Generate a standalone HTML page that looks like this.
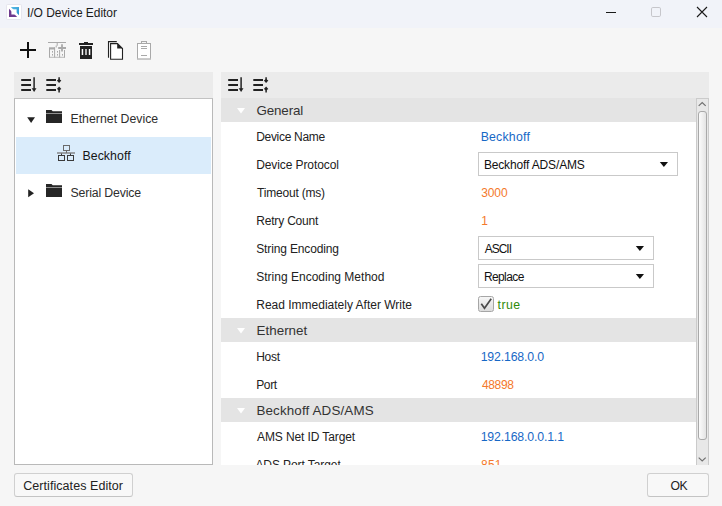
<!DOCTYPE html>
<html>
<head>
<meta charset="utf-8">
<title>I/O Device Editor</title>
<style>
*{box-sizing:border-box;margin:0;padding:0}
html,body{width:722px;height:506px;overflow:hidden}
body{background:#f6f6f6;font-family:"Liberation Sans",sans-serif;font-size:12px;color:#222;position:relative}
.abs{position:absolute}
.t{position:absolute;white-space:nowrap}
.titlebar{left:0;top:0;width:722px;height:28px;background:#f1f3f9}
.strip{background:#ebebeb;height:26px;top:72px}
.tree{left:14px;top:98px;width:199px;height:367px;background:#fff;border:1px solid #b9b9b9;border-top-color:#c2c2c2}
.grid{left:221px;top:98px;width:475px;height:367px;background:#fff;overflow:hidden}
.hdr{left:0;width:475px;height:24px;background:#e4e4e4}
.combo{left:257px;height:24px;border:1px solid #c9c9c9;background:#fff}
.btn{height:24px;border:1px solid #d0d0d0;border-bottom-color:#c4c4c4;background:#f8f8f8;border-radius:3px}
.sb{left:696px;top:98px;width:13px;height:367px;background:#e8e8e8;border:1px solid #cbcbcb;border-bottom:none}
</style>
</head>
<body>
<div class="abs titlebar"></div>
<svg class="abs" style="left:0;top:0" width="28" height="28" viewBox="0 0 28 28">
  <defs><linearGradient id="gb" x1="0" y1="0" x2="1" y2="1"><stop offset="0" stop-color="#58bce6"/><stop offset="1" stop-color="#2a93d0"/></linearGradient></defs>
  <rect x="6.500" y="4.500" width="15" height="15" rx="1.200" fill="#fff" stroke="#e6e6ee"/>
  <polygon points="10.800,7 19,7 19,15.200" fill="url(#gb)"/>
  <polygon points="9,8.800 9,17 17.200,17" fill="#6e3a8e"/>
  <rect x="11.400" y="9.300" width="5.200" height="5.200" fill="#fff"/>
</svg>
<svg class="abs" style="left:600px;top:0" width="122" height="28" viewBox="0 0 122 28">
  <path d="M6 12.500H16" stroke="#1a1a1a" stroke-width="1" fill="none"/>
  <rect x="51.500" y="7.500" width="9" height="9" rx="1.300" fill="none" stroke="#c6c6cb" stroke-width="1"/>
  <path d="M97 7L107 17M107 7L97 17" stroke="#1a1a1a" stroke-width="1.100" fill="none"/>
</svg>

<!-- toolbar -->
<svg class="abs" style="left:0;top:36px" width="170" height="30" viewBox="0 36 170 30">
  <path d="M28 42V58M20 50H36" stroke="#111" stroke-width="2" fill="none"/>
  <g stroke="#a9a9a9" fill="none" stroke-width="1">
    <path d="M48 42.500H66"/>
    <path d="M57.200 42.500V45.800M56.200 45.500V47.500"/>
    <path d="M49.500 48V57.500M54.600 47.500V57.500M59.600 50V57.500M64.500 50V57.500"/>
    <path d="M49 57.300H65" stroke-width="0.800"/>
    <path d="M58.200 48H66M62 44.200V51.500" stroke-width="1.800"/>
  </g>
  <g fill="#a9a9a9">
    <rect x="49" y="47.300" width="6" height="2.200"/>
    <rect x="52" y="51" width="1" height="1.600"/>
    <rect x="52" y="54" width="1" height="1.600"/>
    <rect x="57" y="51" width="1" height="1.600"/>
    <rect x="57" y="54" width="1" height="1.600"/>
    <rect x="62" y="54" width="1" height="1.600"/>
  </g>
  <g fill="#222">
    <rect x="79" y="43" width="14" height="2"/>
    <rect x="84" y="42" width="4" height="1.200"/>
    <rect x="80" y="46" width="12" height="13"/>
  </g>
  <rect x="81.700" y="49" width="1.500" height="6" fill="#fff"/>
  <rect x="85" y="49" width="2" height="6" fill="#b5b5b5"/>
  <rect x="88.800" y="49" width="1.500" height="6" fill="#fff"/>
  <g fill="none" stroke="#222" stroke-width="1.100">
    <path d="M108.500 57.700V41.600H116.800"/>
    <path d="M110.600 43.600H117.500L122.500 48.500V59.300H110.600Z" fill="#fff"/>
  </g>
  <path d="M117.200 43.600L122.500 48.500H117.200Z" fill="#222"/>
  <g fill="none" stroke="#a9a9a9" stroke-width="1">
    <rect x="137.500" y="43.500" width="13" height="15.500" fill="#fff"/>
    <rect x="141.500" y="41.500" width="5" height="2"/>
    <path d="M141 46.500H147M141 48.500H147M141 55.500H147"/>
  </g>
  <rect x="137" y="58.500" width="14" height="1.200" fill="#c4c4c4"/>
</svg>

<!-- left panel -->
<div class="abs strip" style="left:14px;width:199px"></div>
<svg class="abs" style="left:14px;top:72px" width="60" height="26" viewBox="0 0 60 26">
  <g stroke="#222" fill="none">
    <path d="M7.200 8H17M7.200 13H17M7.200 18H17" stroke-width="1.800"/>
    <path d="M20.100 5.200V18" stroke-width="1.500"/>
    <path d="M32.300 8H42M32.300 13H42M32.300 18H42" stroke-width="1.800"/>
    <path d="M45.100 5.300V8.500M45.100 17V20.500" stroke-width="1.500"/>
  </g>
  <g fill="#222">
    <path d="M17.700 16.200H22.500L20.100 20Z"/>
    <path d="M45.100 6.900L47.300 8.600L45.100 11.100L42.900 8.600Z"/>
    <path d="M45.100 14.400L47.300 16.900L45.100 18.600L42.900 16.900Z"/>
  </g>
</svg>
<div class="abs tree">
  <div class="abs" style="left:1px;top:38px;width:195px;height:37px;background:#daecfb"></div>
  <svg class="abs" style="left:0;top:0" width="100" height="112" viewBox="0 0 100 112">
    <path d="M12.200 18.200H20L16.100 24Z" fill="#222"/>
    <path d="M13.200 90.300L19 94.300L13.200 98.300Z" fill="#222"/>
    <g fill="#262626">
      <path d="M31 11H36.500L37.700 12.300H47V14H31Z"/>
      <rect x="31" y="14.500" width="16" height="9.500"/>
      <path d="M31 85H36.500L37.700 86.300H47V88H31Z"/>
      <rect x="31" y="88.500" width="16" height="9.500"/>
    </g>
    <g fill="none" stroke="#3a3a3a" stroke-width="1">
      <rect x="48.500" y="46.500" width="6" height="5" stroke="#6a6a6a"/>
      <path d="M51.500 51.500V54" stroke="#6a6a6a"/>
      <path d="M42 54H60" stroke="#777" stroke-width="1.300"/>
      <rect x="43.500" y="56.500" width="6" height="5"/>
      <rect x="52.500" y="56.500" width="6" height="5"/>
      <path d="M46.500 54.500V56.500M55.500 54.500V56.500"/>
    </g>
  </svg>
</div>

<!-- right panel -->
<div class="abs strip" style="left:221px;width:488px"></div>
<svg class="abs" style="left:221px;top:72px" width="60" height="26" viewBox="0 0 60 26">
  <g stroke="#222" fill="none">
    <path d="M7.200 8H17M7.200 13H17M7.200 18H17" stroke-width="1.800"/>
    <path d="M20.100 5.200V18" stroke-width="1.500"/>
    <path d="M32.300 8H42M32.300 13H42M32.300 18H42" stroke-width="1.800"/>
    <path d="M45.100 5.300V8.500M45.100 17V20.500" stroke-width="1.500"/>
  </g>
  <g fill="#222">
    <path d="M17.700 16.200H22.500L20.100 20Z"/>
    <path d="M45.100 6.900L47.300 8.600L45.100 11.100L42.900 8.600Z"/>
    <path d="M45.100 14.400L47.300 16.900L45.100 18.600L42.900 16.900Z"/>
  </g>
</svg>
<div class="abs grid">
  <div class="abs hdr" style="top:0"></div>
  <div class="abs combo" style="top:54px;width:200px"></div>
  <div class="abs combo" style="top:138px;width:176px"></div>
  <div class="abs combo" style="top:166px;width:176px"></div>
  <div class="abs" style="left:257px;top:198px;width:16px;height:16px;border:1px solid #a6a6a6;border-radius:2.500px;background:linear-gradient(#f6f6f6,#dcdcdc)"></div>
  <svg class="abs" style="left:257px;top:198px" width="16" height="16" viewBox="0 0 16 16"><path d="M3.300 7.700L6.500 12.300L13.200 2.800" stroke="#4a4a4a" stroke-width="1.700" fill="none"/></svg>
  <div class="abs hdr" style="top:220px"></div>
  <div class="abs hdr" style="top:300px"></div>
  <svg class="abs" style="left:0;top:0" width="475" height="367" viewBox="0 0 475 367">
    <g fill="#fff">
      <path d="M16 10H24L20 15.500Z"/>
      <path d="M16 230H24L20 235.500Z"/>
      <path d="M16 310H24L20 315.500Z"/>
    </g>
    <g fill="#111">
      <path d="M438.800 64H447L442.900 69Z"/>
      <path d="M414.800 148H423L418.900 153Z"/>
      <path d="M414.800 176H423L418.900 181Z"/>
    </g>
  </svg>
</div>
<div class="abs sb">
  <div class="abs" style="left:1px;top:12px;width:9px;height:329px;border:1px solid #a9a9a9;border-radius:3px;background:linear-gradient(90deg,#fbfbfb,#e4e4e4)"></div>
  <svg class="abs" style="left:-1px;top:-1px" width="13" height="367" viewBox="0 0 13 367">
    <path d="M2.700 7.900L6.200 4.600L9.700 7.900" stroke="#707070" stroke-width="1.200" fill="none"/>
    <path d="M2.700 359.600L6.200 362.900L9.700 359.600" stroke="#707070" stroke-width="1.200" fill="none"/>
  </svg>
</div>

<!-- bottom buttons -->
<div class="abs btn" style="left:14px;top:473px;width:119px"></div>
<div class="abs btn" style="left:647px;top:473px;width:62px"></div>

<!-- text -->
<div id="title" class="t" style="left:27.00px;top:6.00px;font-size:12px;line-height:14px;color:#1b1b1b;letter-spacing:-0.044px">I/O Device Editor</div>
<div id="tr1" class="t" style="left:70.44px;top:111.80px;font-size:12.3px;line-height:14px;color:#2e2e2e;letter-spacing:0.020px">Ethernet Device</div>
<div id="tr2" class="t" style="left:82.44px;top:148.80px;font-size:12.3px;line-height:14px;color:#151515;letter-spacing:0.080px">Beckhoff</div>
<div id="tr3" class="t" style="left:70.44px;top:185.80px;font-size:12.3px;line-height:14px;color:#2e2e2e;letter-spacing:-0.149px">Serial Device</div>
<div id="h1" class="t" style="left:256.44px;top:102.80px;font-size:13.4px;line-height:15px;color:#333;letter-spacing:-0.140px">General</div>
<div id="h2" class="t" style="left:256.44px;top:322.80px;font-size:13.4px;line-height:15px;color:#333;letter-spacing:0.036px">Ethernet</div>
<div id="h3" class="t" style="left:256.44px;top:402.80px;font-size:13.4px;line-height:15px;color:#333;letter-spacing:0.140px">Beckhoff ADS/AMS</div>
<div id="l1" class="t" style="left:256.22px;top:130.00px;font-size:12px;line-height:14px;color:#222;letter-spacing:-0.315px">Device Name</div>
<div id="l2" class="t" style="left:256.22px;top:158.00px;font-size:12px;line-height:14px;color:#222;letter-spacing:-0.098px">Device Protocol</div>
<div id="l3" class="t" style="left:257.02px;top:186.00px;font-size:12px;line-height:14px;color:#222;letter-spacing:-0.194px">Timeout (ms)</div>
<div id="l4" class="t" style="left:256.22px;top:214.00px;font-size:12px;line-height:14px;color:#222;letter-spacing:-0.181px">Retry Count</div>
<div id="l5" class="t" style="left:256.22px;top:242.00px;font-size:12px;line-height:14px;color:#222;letter-spacing:-0.140px">String Encoding</div>
<div id="l6" class="t" style="left:256.22px;top:270.00px;font-size:12px;line-height:14px;color:#222;letter-spacing:0.006px">String Encoding Method</div>
<div id="l7" class="t" style="left:256.22px;top:298.00px;font-size:12px;line-height:14px;color:#222;letter-spacing:-0.002px">Read Immediately After Write</div>
<div id="l8" class="t" style="left:256.22px;top:350.00px;font-size:12px;line-height:14px;color:#222;letter-spacing:-0.269px">Host</div>
<div id="l9" class="t" style="left:256.22px;top:378.00px;font-size:12px;line-height:14px;color:#222;letter-spacing:-0.379px">Port</div>
<div id="l10" class="t" style="left:257.02px;top:430.00px;font-size:12px;line-height:14px;color:#222;letter-spacing:-0.102px">AMS Net ID Target</div>
<div id="l11" class="t" style="left:255.42px;top:458.00px;font-size:12px;line-height:14px;color:#222;letter-spacing:-0.080px;clip-path:inset(0 0 7.00px 0)">ADS Port Target</div>
<div id="v1" class="t" style="left:480.64px;top:130.00px;font-size:12.3px;line-height:14px;color:#1768c6;letter-spacing:0.228px">Beckhoff</div>
<div id="v3" class="t" style="left:481.22px;top:186.00px;font-size:12px;line-height:14px;color:#f4792b;letter-spacing:-0.121px">3000</div>
<div id="v4" class="t" style="left:481.32px;top:214.00px;font-size:12px;line-height:14px;color:#f4792b;letter-spacing:0.000px">1</div>
<div id="v7" class="t" style="left:497.56px;top:297.60px;font-size:12.3px;line-height:14px;color:#2f8a0a;letter-spacing:0.452px">true</div>
<div id="v8" class="t" style="left:480.64px;top:350.00px;font-size:12.3px;line-height:14px;color:#1768c6;letter-spacing:-0.151px">192.168.0.0</div>
<div id="v9" class="t" style="left:481.90px;top:378.00px;font-size:12px;line-height:14px;color:#f4792b;letter-spacing:-0.319px">48898</div>
<div id="v10" class="t" style="left:480.64px;top:430.00px;font-size:12.3px;line-height:14px;color:#1768c6;letter-spacing:-0.152px">192.168.0.0.1.1</div>
<div id="v11" class="t" style="left:481.10px;top:458.00px;font-size:12px;line-height:14px;color:#f4792b;letter-spacing:0.184px;clip-path:inset(0 0 7.00px 0)">851</div>
<div id="c2" class="t" style="left:483.88px;top:158.00px;font-size:12px;line-height:14px;color:#111;letter-spacing:-0.145px">Beckhoff ADS/AMS</div>
<div id="c5" class="t" style="left:484.68px;top:242.00px;font-size:11.9px;line-height:14px;color:#111;letter-spacing:-0.931px">ASCII</div>
<div id="c6" class="t" style="left:483.88px;top:270.00px;font-size:12px;line-height:14px;color:#111;letter-spacing:-0.599px">Replace</div>
<div id="b1" class="t" style="left:23.22px;top:479.00px;font-size:12.5px;line-height:14px;color:#222;letter-spacing:0.061px">Certificates Editor</div>
<div id="b2" class="t" style="left:670.56px;top:479.00px;font-size:12.2px;line-height:14px;color:#222;letter-spacing:-0.600px">OK</div>
</body>
</html>
